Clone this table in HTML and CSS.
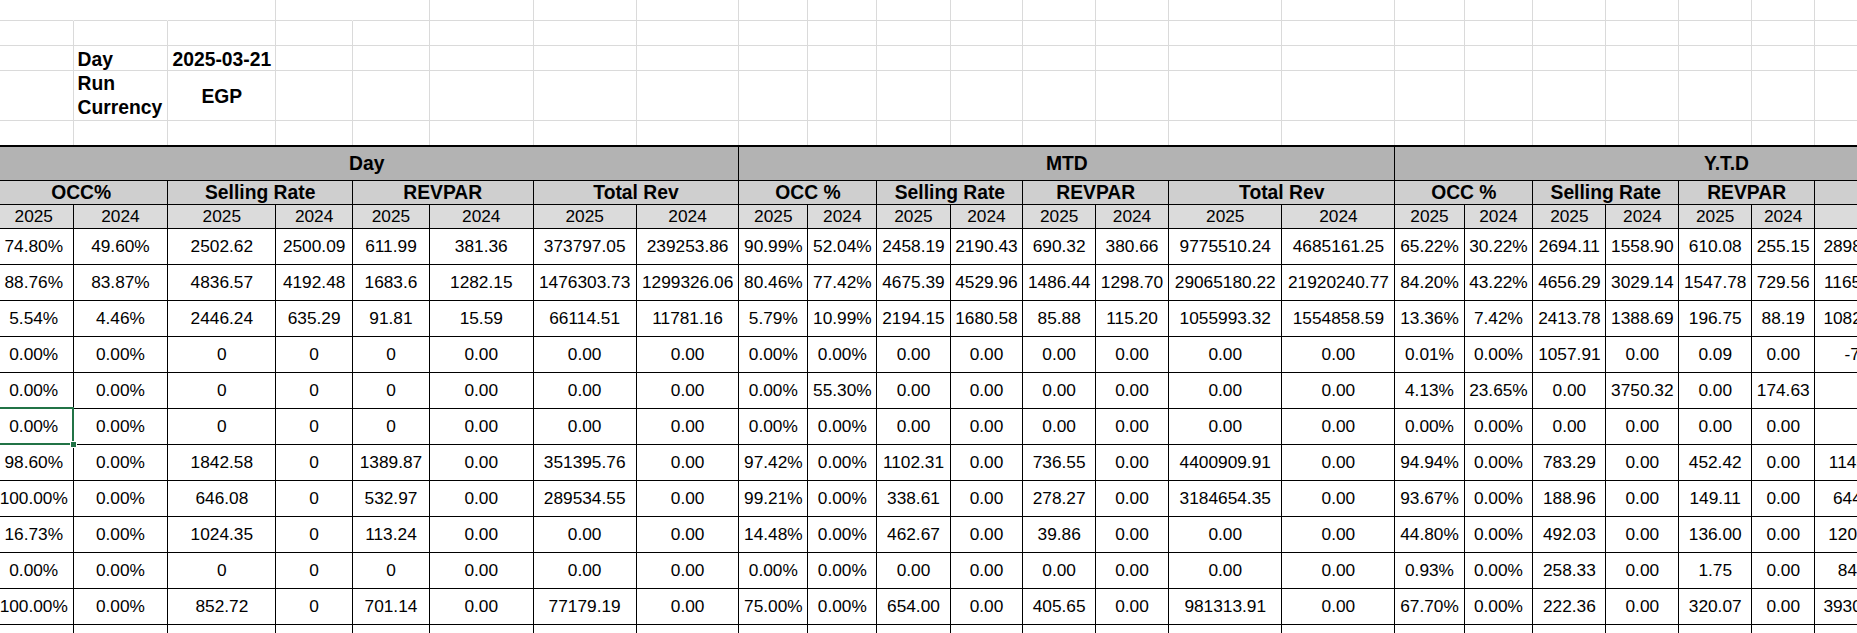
FILE: index.html
```html
<!DOCTYPE html>
<html lang="en">
<head>
<meta charset="utf-8">
<title>Daily Report</title>
<link rel="stylesheet" href="styles.css">
</head>
<body>
<div class="sheet">
  <table class="top">
    <colgroup class="cols">
      <col><col><col><col><col><col><col><col><col><col><col><col><col><col><col><col><col><col><col><col><col><col><col><col>
    </colgroup>
    <tbody>
      <tr class="r1"><td class="nb"></td><td class="nb"></td><td></td><td class="nb"></td><td></td><td></td><td></td><td></td><td></td><td></td><td></td><td></td><td></td><td></td><td></td><td></td><td></td><td></td><td></td><td></td><td></td><td></td><td></td><td></td></tr>
      <tr class="r2"><td></td><td></td><td></td><td></td><td></td><td></td><td></td><td></td><td></td><td></td><td></td><td></td><td></td><td></td><td></td><td></td><td></td><td></td><td></td><td></td><td></td><td></td><td></td><td></td></tr>
      <tr class="r3"><td></td><td class="lbl">Day</td><td class="val">2025-03-21</td><td></td><td></td><td></td><td></td><td></td><td></td><td></td><td></td><td></td><td></td><td></td><td></td><td></td><td></td><td></td><td></td><td></td><td></td><td></td><td></td><td></td></tr>
      <tr class="r4"><td></td><td class="lbl wrap">Run Currency</td><td class="val mid">EGP</td><td></td><td></td><td></td><td></td><td></td><td></td><td></td><td></td><td></td><td></td><td></td><td></td><td></td><td></td><td></td><td></td><td></td><td></td><td></td><td></td><td></td></tr>
      <tr class="r5"><td></td><td></td><td></td><td></td><td></td><td></td><td></td><td></td><td></td><td></td><td></td><td></td><td></td><td></td><td></td><td></td><td></td><td></td><td></td><td></td><td></td><td></td><td></td><td></td></tr>
    </tbody>
  </table>

  <table class="grid">
    <colgroup class="cols">
      <col><col><col><col><col><col><col><col><col><col><col><col><col><col><col><col><col><col><col><col><col><col><col><col>
    </colgroup>
    <thead>
      <tr class="g">
        <th colspan="8">Day</th>
        <th colspan="8">MTD</th>
        <th colspan="8">Y.T.D</th>
      </tr>
      <tr class="s">
        <th colspan="2">OCC%</th><th colspan="2">Selling Rate</th><th colspan="2">REVPAR</th><th colspan="2">Total Rev</th>
        <th colspan="2">OCC %</th><th colspan="2">Selling Rate</th><th colspan="2">REVPAR</th><th colspan="2">Total Rev</th>
        <th colspan="2">OCC %</th><th colspan="2">Selling Rate</th><th colspan="2">REVPAR</th><th colspan="2">Total Rev</th>
      </tr>
      <tr class="y">
        <th>2025</th><th>2024</th><th>2025</th><th>2024</th><th>2025</th><th>2024</th><th>2025</th><th>2024</th>
        <th>2025</th><th>2024</th><th>2025</th><th>2024</th><th>2025</th><th>2024</th><th>2025</th><th>2024</th>
        <th>2025</th><th>2024</th><th>2025</th><th>2024</th><th>2025</th><th>2024</th><th>2025</th><th>2024</th>
      </tr>
    </thead>
    <tbody>
      <tr class="d"><td>74.80%</td><td>49.60%</td><td>2502.62</td><td>2500.09</td><td>611.99</td><td>381.36</td><td>373797.05</td><td>239253.86</td><td>90.99%</td><td>52.04%</td><td>2458.19</td><td>2190.43</td><td>690.32</td><td>380.66</td><td>9775510.24</td><td>4685161.25</td><td>65.22%</td><td>30.22%</td><td>2694.11</td><td>1558.90</td><td>610.08</td><td>255.15</td><td>289825143.61</td><td>95891204.47</td></tr>
      <tr class="d"><td>88.76%</td><td>83.87%</td><td>4836.57</td><td>4192.48</td><td>1683.6</td><td>1282.15</td><td>1476303.73</td><td>1299326.06</td><td>80.46%</td><td>77.42%</td><td>4675.39</td><td>4529.96</td><td>1486.44</td><td>1298.70</td><td>29065180.22</td><td>21920240.77</td><td>84.20%</td><td>43.22%</td><td>4656.29</td><td>3029.14</td><td>1547.78</td><td>729.56</td><td>116548730.42</td><td>57412093.81</td></tr>
      <tr class="d"><td>5.54%</td><td>4.46%</td><td>2446.24</td><td>635.29</td><td>91.81</td><td>15.59</td><td>66114.51</td><td>11781.16</td><td>5.79%</td><td>10.99%</td><td>2194.15</td><td>1680.58</td><td>85.88</td><td>115.20</td><td>1055993.32</td><td>1554858.59</td><td>13.36%</td><td>7.42%</td><td>2413.78</td><td>1388.69</td><td>196.75</td><td>88.19</td><td>108234176.50</td><td>6947120.33</td></tr>
      <tr class="d"><td>0.00%</td><td>0.00%</td><td>0</td><td>0</td><td>0</td><td>0.00</td><td>0.00</td><td>0.00</td><td>0.00%</td><td>0.00%</td><td>0.00</td><td>0.00</td><td>0.00</td><td>0.00</td><td>0.00</td><td>0.00</td><td>0.01%</td><td>0.00%</td><td>1057.91</td><td>0.00</td><td>0.09</td><td>0.00</td><td>-7254.18</td><td>0.00</td></tr>
      <tr class="d"><td>0.00%</td><td>0.00%</td><td>0</td><td>0</td><td>0</td><td>0.00</td><td>0.00</td><td>0.00</td><td>0.00%</td><td>55.30%</td><td>0.00</td><td>0.00</td><td>0.00</td><td>0.00</td><td>0.00</td><td>0.00</td><td>4.13%</td><td>23.65%</td><td>0.00</td><td>3750.32</td><td>0.00</td><td>174.63</td><td></td><td></td></tr>
      <tr class="d"><td class="sel">0.00%</td><td>0.00%</td><td>0</td><td>0</td><td>0</td><td>0.00</td><td>0.00</td><td>0.00</td><td>0.00%</td><td>0.00%</td><td>0.00</td><td>0.00</td><td>0.00</td><td>0.00</td><td>0.00</td><td>0.00</td><td>0.00%</td><td>0.00%</td><td>0.00</td><td>0.00</td><td>0.00</td><td>0.00</td><td></td><td></td></tr>
      <tr class="d"><td>98.60%</td><td>0.00%</td><td>1842.58</td><td>0</td><td>1389.87</td><td>0.00</td><td>351395.76</td><td>0.00</td><td>97.42%</td><td>0.00%</td><td>1102.31</td><td>0.00</td><td>736.55</td><td>0.00</td><td>4400909.91</td><td>0.00</td><td>94.94%</td><td>0.00%</td><td>783.29</td><td>0.00</td><td>452.42</td><td>0.00</td><td>11452638.04</td><td>0.00</td></tr>
      <tr class="d"><td>100.00%</td><td>0.00%</td><td>646.08</td><td>0</td><td>532.97</td><td>0.00</td><td>289534.55</td><td>0.00</td><td>99.21%</td><td>0.00%</td><td>338.61</td><td>0.00</td><td>278.27</td><td>0.00</td><td>3184654.35</td><td>0.00</td><td>93.67%</td><td>0.00%</td><td>188.96</td><td>0.00</td><td>149.11</td><td>0.00</td><td>6446122.79</td><td>0.00</td></tr>
      <tr class="d"><td>16.73%</td><td>0.00%</td><td>1024.35</td><td>0</td><td>113.24</td><td>0.00</td><td>0.00</td><td>0.00</td><td>14.48%</td><td>0.00%</td><td>462.67</td><td>0.00</td><td>39.86</td><td>0.00</td><td>0.00</td><td>0.00</td><td>44.80%</td><td>0.00%</td><td>492.03</td><td>0.00</td><td>136.00</td><td>0.00</td><td>12045631.80</td><td>0.00</td></tr>
      <tr class="d"><td>0.00%</td><td>0.00%</td><td>0</td><td>0</td><td>0</td><td>0.00</td><td>0.00</td><td>0.00</td><td>0.00%</td><td>0.00%</td><td>0.00</td><td>0.00</td><td>0.00</td><td>0.00</td><td>0.00</td><td>0.00</td><td>0.93%</td><td>0.00%</td><td>258.33</td><td>0.00</td><td>1.75</td><td>0.00</td><td>841235.50</td><td>0.00</td></tr>
      <tr class="d"><td>100.00%</td><td>0.00%</td><td>852.72</td><td>0</td><td>701.14</td><td>0.00</td><td>77179.19</td><td>0.00</td><td>75.00%</td><td>0.00%</td><td>654.00</td><td>0.00</td><td>405.65</td><td>0.00</td><td>981313.91</td><td>0.00</td><td>67.70%</td><td>0.00%</td><td>222.36</td><td>0.00</td><td>320.07</td><td>0.00</td><td>393066227.10</td><td>0.00</td></tr>
      <tr class="d"><td></td><td></td><td></td><td></td><td></td><td></td><td></td><td></td><td></td><td></td><td></td><td></td><td></td><td></td><td></td><td></td><td></td><td></td><td></td><td></td><td></td><td></td><td></td><td></td></tr>
    </tbody>
  </table>
</div>
</body>
</html>
```

FILE: styles.css
```css
html, body {
  margin: 0;
  padding: 0;
  background: #ffffff;
  overflow: hidden;
}

body {
  width: 1857px;
  height: 633px;
  font-family: "Liberation Sans", Arial, sans-serif;
  color: #000000;
}

.sheet {
  margin-left: -5px;
  width: 2063.5px;
}

table {
  border-collapse: separate;
  border-spacing: 0;
  table-layout: fixed;
  width: 2063.5px;
}

td, th {
  padding: 0;
  box-sizing: border-box;
  overflow: hidden;
  white-space: nowrap;
}

/* column widths */
.cols col:nth-child(1)  { width: 78.5px; }
.cols col:nth-child(2)  { width: 94.9px; }
.cols col:nth-child(3)  { width: 107.9px; }
.cols col:nth-child(4)  { width: 76.7px; }
.cols col:nth-child(5)  { width: 77px; }
.cols col:nth-child(6)  { width: 103.6px; }
.cols col:nth-child(7)  { width: 103.2px; }
.cols col:nth-child(8)  { width: 102.7px; }
.cols col:nth-child(9)  { width: 68.8px; }
.cols col:nth-child(10) { width: 69.2px; }
.cols col:nth-child(11) { width: 73.1px; }
.cols col:nth-child(12) { width: 72.9px; }
.cols col:nth-child(13) { width: 72.5px; }
.cols col:nth-child(14) { width: 73.2px; }
.cols col:nth-child(15) { width: 113.3px; }
.cols col:nth-child(16) { width: 113px; }
.cols col:nth-child(17) { width: 69.2px; }
.cols col:nth-child(18) { width: 68.7px; }
.cols col:nth-child(19) { width: 73.2px; }
.cols col:nth-child(20) { width: 72.7px; }
.cols col:nth-child(21) { width: 73.1px; }
.cols col:nth-child(22) { width: 62.9px; }
.cols col:nth-child(23) { width: 128px; }
.cols col:nth-child(24) { width: 115.2px; }

/* top info area with sheet gridlines */
.top td {
  border-right: 1px solid #dadada;
  border-bottom: 1px solid #dadada;
  font-size: 19.3px;
  font-weight: bold;
  line-height: 20px;
  vertical-align: bottom;
}

.top td.nb { border-right-color: transparent; }

.top .r1 td { height: 21.3px; }
.top .r2 td { height: 25px; }
.top .r3 td { height: 25px; }
.top .r4 td { height: 50px; }
.top .r5 td { height: 23.7px; border-bottom: 0; }

.top .lbl {
  text-align: left;
  padding-left: 4px;
}

.top .wrap {
  white-space: normal;
  line-height: 24px;
  vertical-align: top;
  padding-top: 1px;
}

.top .val { text-align: center; }

.top .mid {
  vertical-align: middle;
  padding-top: 2px;
}

/* report grid */
.grid td, .grid th {
  border-right: 1px solid #000000;
  border-bottom: 1px solid #000000;
  text-align: center;
  vertical-align: middle;
  font-size: 17.3px;
  font-weight: normal;
}

.grid .g th {
  height: 36.3px;
  border-top: 2px solid #000000;
  background: #b3b3b3;
  font-size: 19.3px;
  font-weight: bold;
}

.grid .s th {
  height: 24px;
  background: #cfcfcf;
  font-size: 19.3px;
  font-weight: bold;
}

.grid .y th {
  height: 23.4px;
  background: #dbdbdb;
}

.grid .d td { height: 36px; }

/* active cell selection */
.grid td.sel {
  position: relative;
  overflow: visible;
}

.grid td.sel::before {
  content: "";
  position: absolute;
  left: -2px;
  top: -2px;
  right: -1px;
  bottom: -1px;
  border: 2px solid #217346;
}

.grid td.sel::after {
  content: "";
  position: absolute;
  right: -4px;
  bottom: -4px;
  width: 7px;
  height: 7px;
  box-sizing: border-box;
  border: 1px solid #ffffff;
  background: #217346;
}
```
